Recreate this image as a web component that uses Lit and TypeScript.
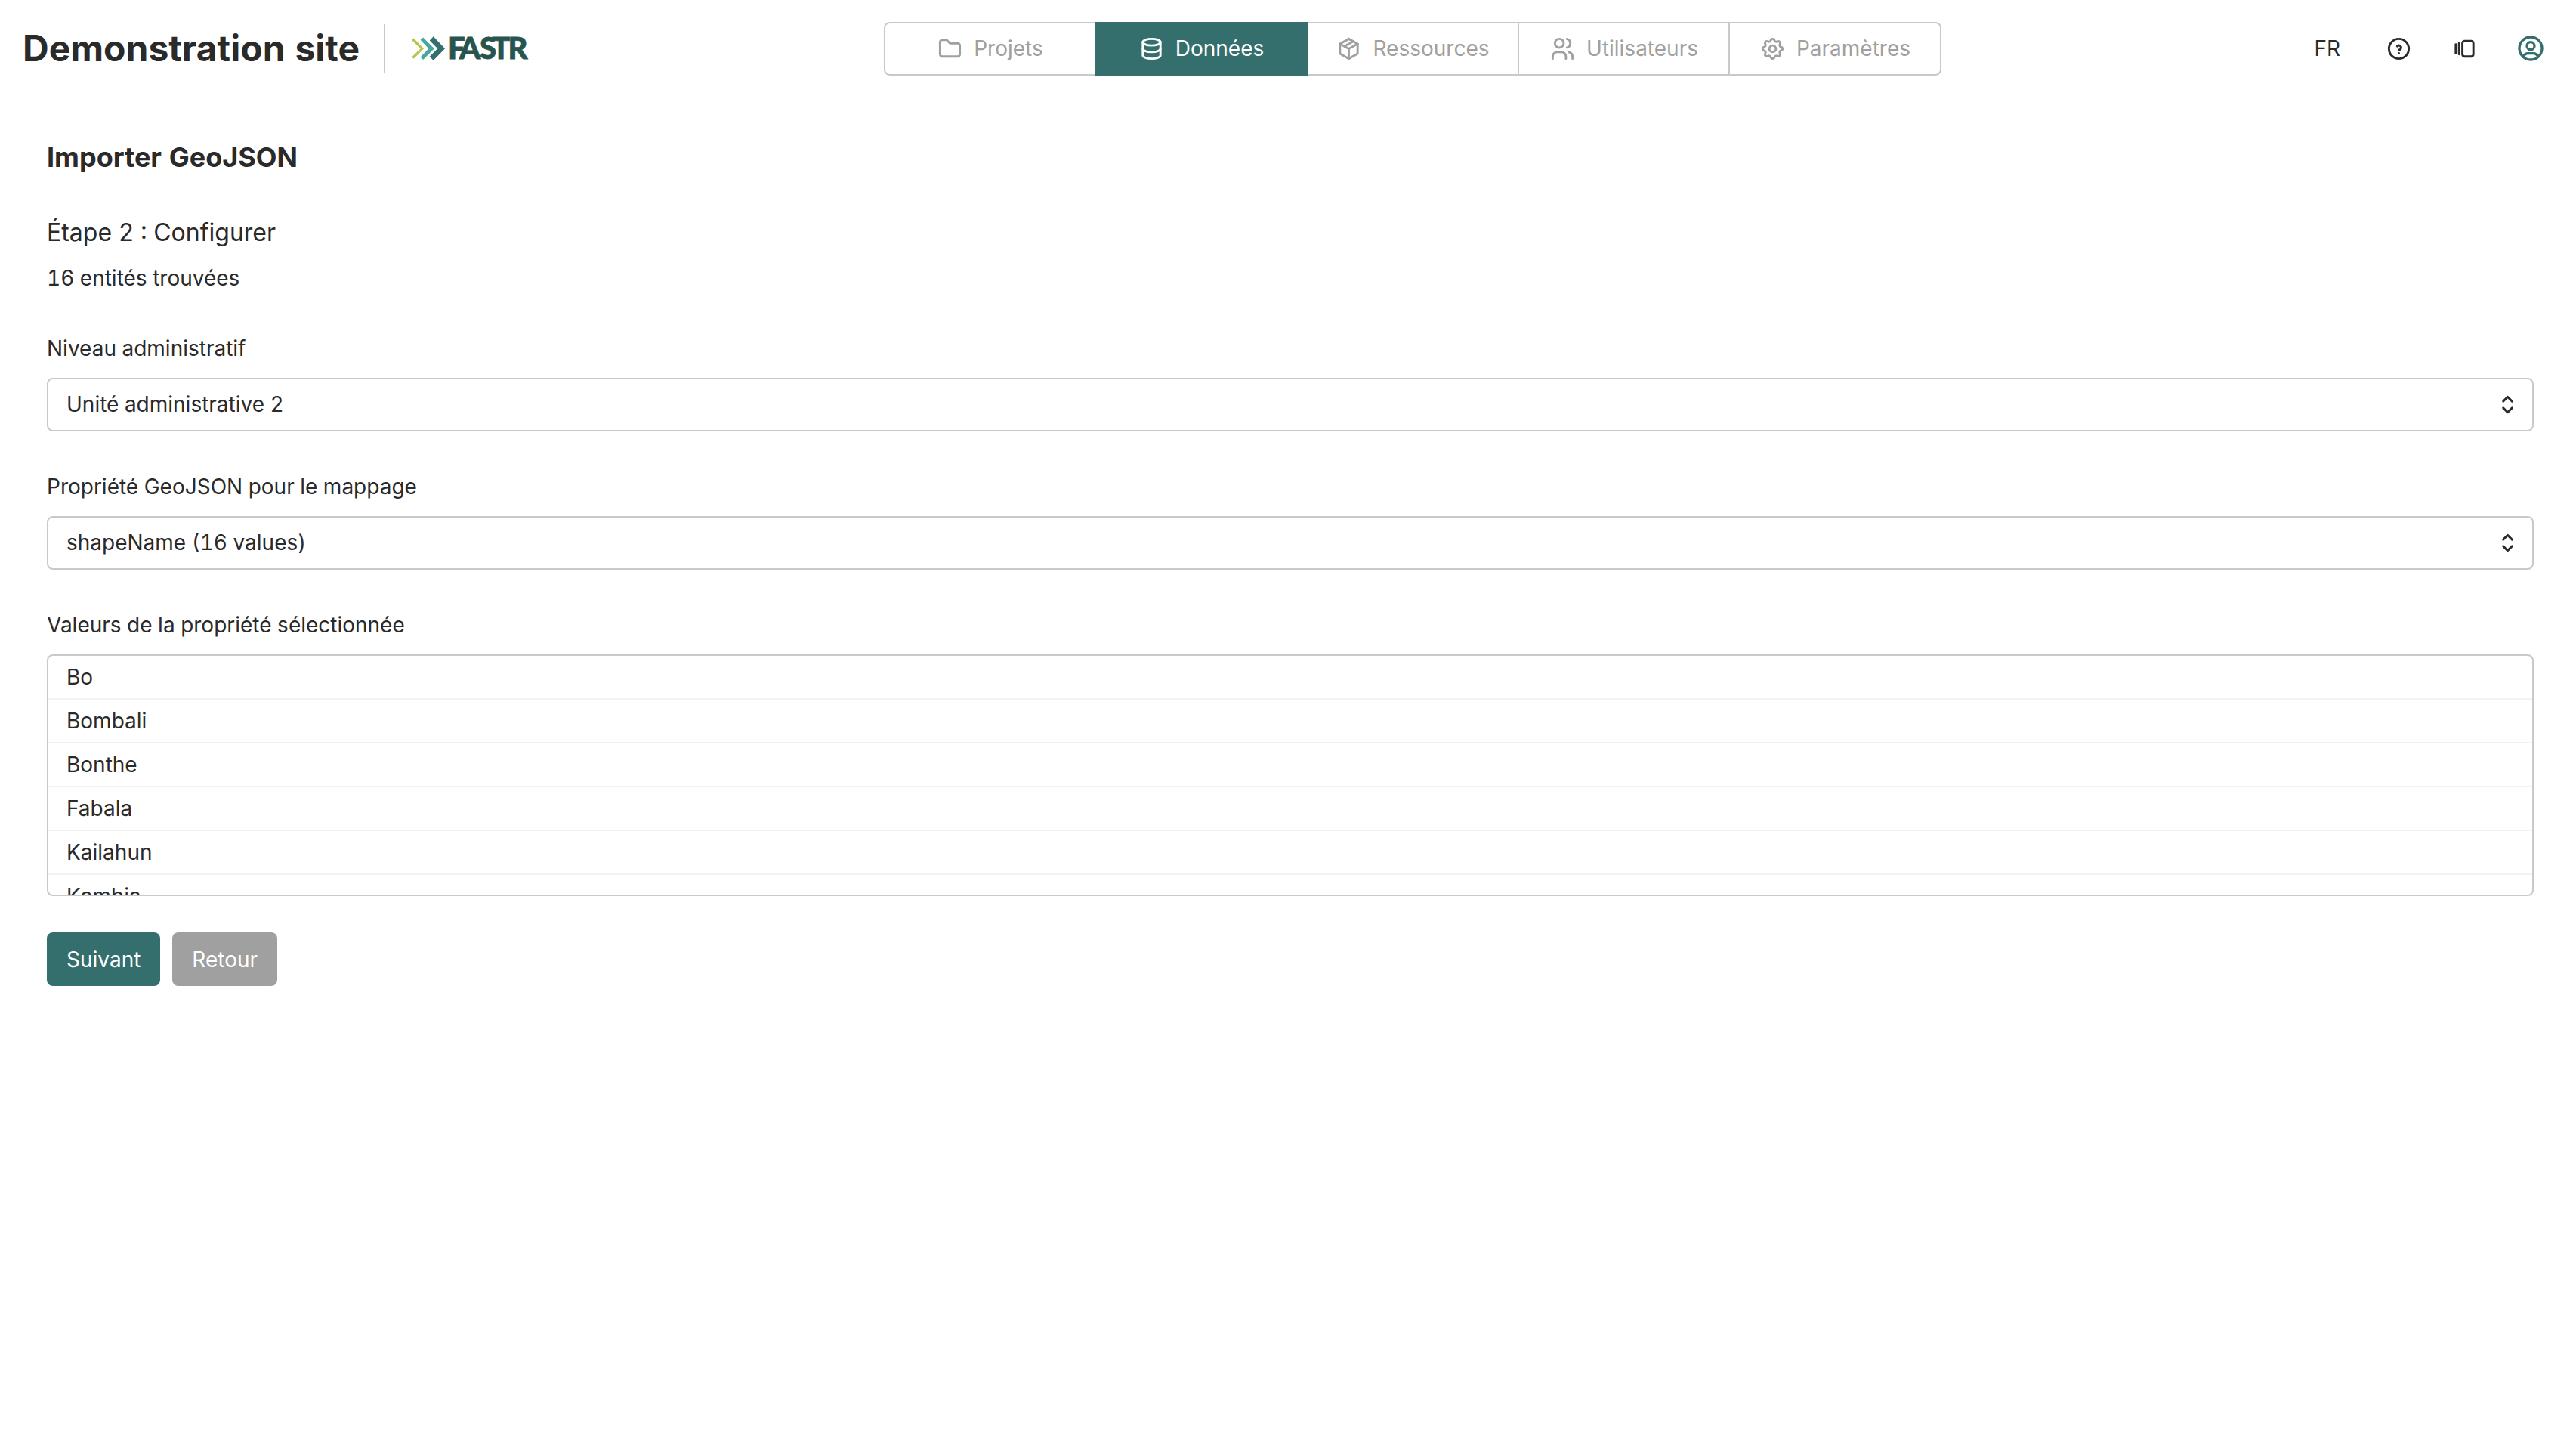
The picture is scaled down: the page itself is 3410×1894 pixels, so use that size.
import { LitElement, html, css, svg } from "lit";
import { customElement, property, state } from "lit/decorators.js";
import { classMap } from "lit/directives/class-map.js";

const ICONS: Record<string, string[]> = {
  folder: ["M5 4h4l3 3h7a2 2 0 0 1 2 2v8a2 2 0 0 1 -2 2h-14a2 2 0 0 1 -2 -2v-11a2 2 0 0 1 2 -2"],
  database: [
    "M4 6a8 3 0 1 0 16 0a8 3 0 1 0 -16 0",
    "M4 6v6a8 3 0 0 0 16 0v-6",
    "M4 12v6a8 3 0 0 0 16 0v-6",
  ],
  box: ["M12 3l8 4.5v9l-8 4.5l-8 -4.5v-9l8 -4.5", "M12 12l8 -4.5", "M12 12v9", "M12 12l-8 -4.5", "M16 5.25l-8 4.5"],
  users: [
    "M5 7a4 4 0 1 0 8 0a4 4 0 1 0 -8 0",
    "M3 21v-2a4 4 0 0 1 4 -4h4a4 4 0 0 1 4 4v2",
    "M16 3.13a4 4 0 0 1 0 7.75",
    "M21 21v-2a4 4 0 0 0 -3 -3.85",
  ],
  settings: [
    "M10.325 4.317c.426 -1.756 2.924 -1.756 3.35 0a1.724 1.724 0 0 0 2.573 1.066c1.543 -.94 3.31 .826 2.37 2.37a1.724 1.724 0 0 0 1.065 2.572c1.756 .426 1.756 2.924 0 3.35a1.724 1.724 0 0 0 -1.066 2.573c.94 1.543 -.826 3.31 -2.37 2.37a1.724 1.724 0 0 0 -2.572 1.065c-.426 1.756 -2.924 1.756 -3.35 0a1.724 1.724 0 0 0 -2.573 -1.066c-1.543 .94 -3.31 -.826 -2.37 -2.37a1.724 1.724 0 0 0 -1.065 -2.572c-1.756 -.426 -1.756 -2.924 0 -3.35a1.724 1.724 0 0 0 1.066 -2.573c-.94 -1.543 .826 -3.31 2.37 -2.37c1 .608 2.296 .07 2.572 -1.065",
    "M9 12a3 3 0 1 0 6 0a3 3 0 1 0 -6 0",
  ],
  help: ["M3 12a9 9 0 1 0 18 0a9 9 0 1 0 -18 0", "M12 16v.01", "M12 13a2 2 0 0 0 .914 -3.782a1.98 1.98 0 0 0 -2.414 .483"],
  versions: ["M10 7a2 2 0 0 1 2 -2h6a2 2 0 0 1 2 2v10a2 2 0 0 1 -2 2h-6a2 2 0 0 1 -2 -2z", "M7 7v10", "M4 8v8"],
  user: [
    "M3 12a9 9 0 1 0 18 0a9 9 0 1 0 -18 0",
    "M9 10a3 3 0 1 0 6 0a3 3 0 1 0 -6 0",
    "M6.168 18.849a4 4 0 0 1 3.832 -2.849h4a4 4 0 0 1 3.834 2.855",
  ],
  selector: ["M8 9l4 -4l4 4", "M16 15l-4 4l-4 -4"],
};

@customElement("ui-icon")
class UiIcon extends LitElement {
  @property() name = "";
  static styles = css`
    :host { display: block; width: 35px; height: 35px; flex: none; }
    svg { display: block; width: 100%; height: 100%; fill: none; stroke: currentColor; stroke-width: 2; stroke-linecap: round; stroke-linejoin: round; }
  `;
  render() {
    return html`<svg viewBox="0 0 24 24">${(ICONS[this.name] ?? []).map((d) => svg`<path d=${d} />`)}</svg>`;
  }
}

@customElement("fastr-logo")
class FastrLogo extends LitElement {
  static styles = css`
    :host { display: block; }
    svg { display: block; width: 160px; height: 50px; overflow: visible; }
    .lime { fill: #b5c550; }
    .aqua { fill: #4ba6a0; }
    .teal { fill: #346f6d; }
    .word { font: 900 40px Lato, sans-serif; fill: #27544f; stroke: #27544f; stroke-width: 0.8; }
  `;
  render() {
    return html`<svg viewBox="0 0 160 50">
      <path class="lime" d="M7.6 10.4L21 24.3L7.6 37.8L5 35.4L16.6 24.3L5 13Z" />
      <path class="aqua" d="M20 9.4L35 24.3L20 39L16.6 35.5L27.3 24.3L16.6 12.8Z" />
      <path class="teal" d="M33.7 8.2L49 24.2L33.7 40L28.7 34.8L39.3 24.2L28.7 13.4Z" />
      <text class="word" x="53 68 95 111 132.6" y="38">FASTR</text>
    </svg>`;
  }
}

@customElement("select-field")
class SelectField extends LitElement {
  @property() label = "";
  @property() value = "";
  static styles = css`
    :host { display: flex; flex-direction: column; gap: 21px; }
    .label { line-height: 35px; }
    .box { box-sizing: border-box; height: 71px; border: 2px solid #c9c9c9; border-radius: 8px; display: flex; align-items: center; justify-content: space-between; padding: 0 15px 0 24px; line-height: 35px; }
  `;
  render() {
    return html`<div class="label">${this.label}</div>
      <div class="box"><span>${this.value}</span><ui-icon name="selector"></ui-icon></div>`;
  }
}

@customElement("app-root")
class AppRoot extends LitElement {
  @state() private active = "Données";

  private tabs = [
    { icon: "folder", label: "Projets" },
    { icon: "database", label: "Données" },
    { icon: "box", label: "Ressources" },
    { icon: "users", label: "Utilisateurs" },
    { icon: "settings", label: "Paramètres" },
  ];
  private values = ["Bo", "Bombali", "Bonthe", "Fabala", "Kailahun", "Kambia"];

  static styles = css`
    :host { display: block; min-height: 1894px; background: #fff; color: #2a2a2a; font: 28px/35px Inter, sans-serif; font-variant-numeric: tabular-nums; }
    .header { box-sizing: border-box; height: 128px; display: flex; align-items: center; justify-content: space-between; padding: 0 40px 0 30px; }
    .brand { display: flex; align-items: center; width: 670px; }
    .title { font-size: 48px; font-weight: 700; line-height: 60px; white-space: nowrap; }
    .rule { width: 2px; height: 64px; background: #c9c9c9; margin: 0 30px 0 33px; flex: none; }
    .rule { margin-left: 32px; }
    .logo { margin-top: 2px; }
    .nav { display: grid; grid-template-columns: 279px 280px 280px 279px 280px; padding-right: 2px; margin-top: 1px; color: #a0a0a0; }
    .tab { box-sizing: border-box; height: 71px; border: 2px solid #c9c9c9; margin-right: -2px; display: flex; align-items: center; justify-content: center; gap: 14px; cursor: pointer; }
    .tab:first-child { border-radius: 8px 0 0 8px; }
    .tab:last-child { border-radius: 0 8px 8px 0; }
    .tab.active { background: #346f6d; border-color: #346f6d; color: #fff; z-index: 1; }
    .tools { display: flex; align-items: center; width: 330px; justify-content: flex-end; }
    .lang { margin-right: 60px; }
    .help { margin-right: 52px; }
    .versions { margin-right: 50px; }
    .account { width: 40px; height: 40px; color: #346f6d; }
    .main { padding: 58px 56px 0 62px; display: flex; flex-direction: column; }
    .heading { font-size: 36px; font-weight: 700; line-height: 44px; margin-bottom: 58px; }
    .step { font-size: 32px; line-height: 40px; margin-bottom: 23px; }
    .count { margin-bottom: 58px; }
    .fields { display: flex; flex-direction: column; gap: 56px; }
    .group { display: flex; flex-direction: column; gap: 21px; }
    .list { box-sizing: border-box; height: 320px; overflow: hidden; border: 2px solid #c9c9c9; border-radius: 8px; }
    .row { box-sizing: border-box; height: 58px; padding: 0 24px; line-height: 56px; border-bottom: 2px solid #f2f2f2; }
    .actions { display: flex; gap: 16px; margin-top: 48px; }
    .btn { height: 71px; line-height: 73px; padding: 0 26px; border-radius: 8px; background: #a0a0a0; color: #fff; }
    .btn.primary { background: #346f6d; }
  `;

  render() {
    return html`
      <header class="header">
        <div class="brand">
          <div class="title">Demonstration site</div>
          <div class="rule"></div>
          <fastr-logo class="logo"></fastr-logo>
        </div>
        <nav class="nav">
          ${this.tabs.map(
            (t) => html`<div class=${classMap({ tab: true, active: t.label === this.active })} @click=${() => (this.active = t.label)}>
              <ui-icon name=${t.icon}></ui-icon><span>${t.label}</span>
            </div>`
          )}
        </nav>
        <div class="tools">
          <span class="lang">FR</span>
          <ui-icon class="help" name="help"></ui-icon>
          <ui-icon class="versions" name="versions"></ui-icon>
          <ui-icon class="account" name="user"></ui-icon>
        </div>
      </header>
      <main class="main">
        <div class="heading">Importer GeoJSON</div>
        <div class="step">Étape 2 : Configurer</div>
        <div class="count">16 entités trouvées</div>
        <div class="fields">
          <select-field label="Niveau administratif" value="Unité administrative 2"></select-field>
          <select-field label="Propriété GeoJSON pour le mappage" value="shapeName (16 values)"></select-field>
          <div class="group">
            <div>Valeurs de la propriété sélectionnée</div>
            <div class="list">${this.values.map((v) => html`<div class="row">${v}</div>`)}</div>
          </div>
        </div>
        <div class="actions">
          <div class="btn primary">Suivant</div>
          <div class="btn">Retour</div>
        </div>
      </main>
    `;
  }
}
